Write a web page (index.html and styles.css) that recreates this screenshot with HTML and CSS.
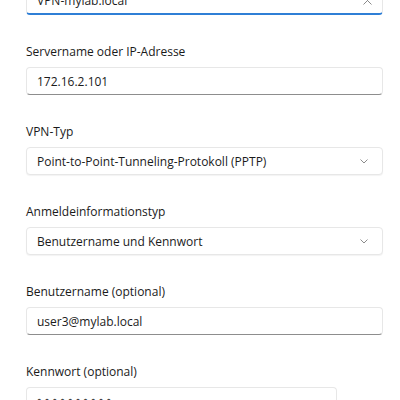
FILE: index.html
```html
<!DOCTYPE html>
<html lang="de">
<head>
    <meta charset="utf-8">
    <title>VPN-Verbindung hinzufügen</title>
    <link rel="stylesheet" href="styles.css">
</head>
<body>
    <div class="panel">
        <div class="box text-box focused first">
            <input type="text" value="VPN-mylab.local">
            <span class="clear">
                <svg width="9" height="9" viewBox="0 0 9 9"><path d="M0.5 0.5 L8.5 8.5 M8.5 0.5 L0.5 8.5" stroke="#8a8a8a" stroke-width="1" fill="none"/></svg>
            </span>
        </div>

        <div class="field">
            <label>Servername oder IP-Adresse</label>
            <div class="box text-box">
                <input type="text" value="172.16.2.101">
            </div>
        </div>

        <div class="field">
            <label>VPN-Typ</label>
            <div class="box combo">
                <span class="combo-value">Point-to-Point-Tunneling-Protokoll (PPTP)</span>
                <svg class="chevron" width="8" height="5" viewBox="0 0 8 5"><path d="M0.5 0.5 L4 4 L7.5 0.5" stroke="#8c8c8c" stroke-width="1" fill="none"/></svg>
            </div>
        </div>

        <div class="field">
            <label>Anmeldeinformationstyp</label>
            <div class="box combo">
                <span class="combo-value">Benutzername und Kennwort</span>
                <svg class="chevron" width="8" height="5" viewBox="0 0 8 5"><path d="M0.5 0.5 L4 4 L7.5 0.5" stroke="#8c8c8c" stroke-width="1" fill="none"/></svg>
            </div>
        </div>

        <div class="field">
            <label>Benutzername (optional)</label>
            <div class="box text-box">
                <input type="text" value="user3@mylab.local">
            </div>
        </div>

        <div class="field">
            <label>Kennwort (optional)</label>
            <div class="box text-box password">
                <span class="dots">●●●●●●●●●●</span>
            </div>
        </div>
    </div>
</body>
</html>
```

FILE: styles.css
```css
body {
    margin: 0;
    background-color: #ffffff;
    font-family: "Open Sans", "Noto Sans", sans-serif;
    color: #1b1b1b;
    overflow: hidden;
}

.panel {
    padding: 0 17px 0 26px;
}

.field {
    margin-top: 28px;
}

label {
    display: block;
    font-size: 12px;
    line-height: 18px;
    margin-bottom: 6px;
    color: #1a1a1a;
}

.box {
    display: flex;
    align-items: center;
    box-sizing: border-box;
    height: 28px;
    padding: 0 10px;
    background-color: #ffffff;
    border: 1px solid #e7e7e7;
    border-radius: 4px;
}

.box input {
    flex: 1;
    border: none;
    outline: none;
    padding: 0;
    background: transparent;
    font-family: inherit;
    font-size: 12px;
    color: #1b1b1b;
}

.text-box {
    border-bottom-color: #8d8d8d;
}

.first {
    margin-top: -13px;
}

.focused {
    border-bottom: 2px solid #2f7fd6;
}

.clear {
    display: flex;
}

.combo {
    justify-content: space-between;
    box-shadow: 0 1px 1px rgba(0, 0, 0, 0.05);
}

.combo-value {
    font-size: 12px;
}

.chevron {
    margin-right: 4px;
}

.password {
    width: 311px;
    align-items: flex-start;
}

.dots {
    margin-top: 7px;
    font-size: 7px;
    letter-spacing: 3.5px;
    color: #444;
}
```
